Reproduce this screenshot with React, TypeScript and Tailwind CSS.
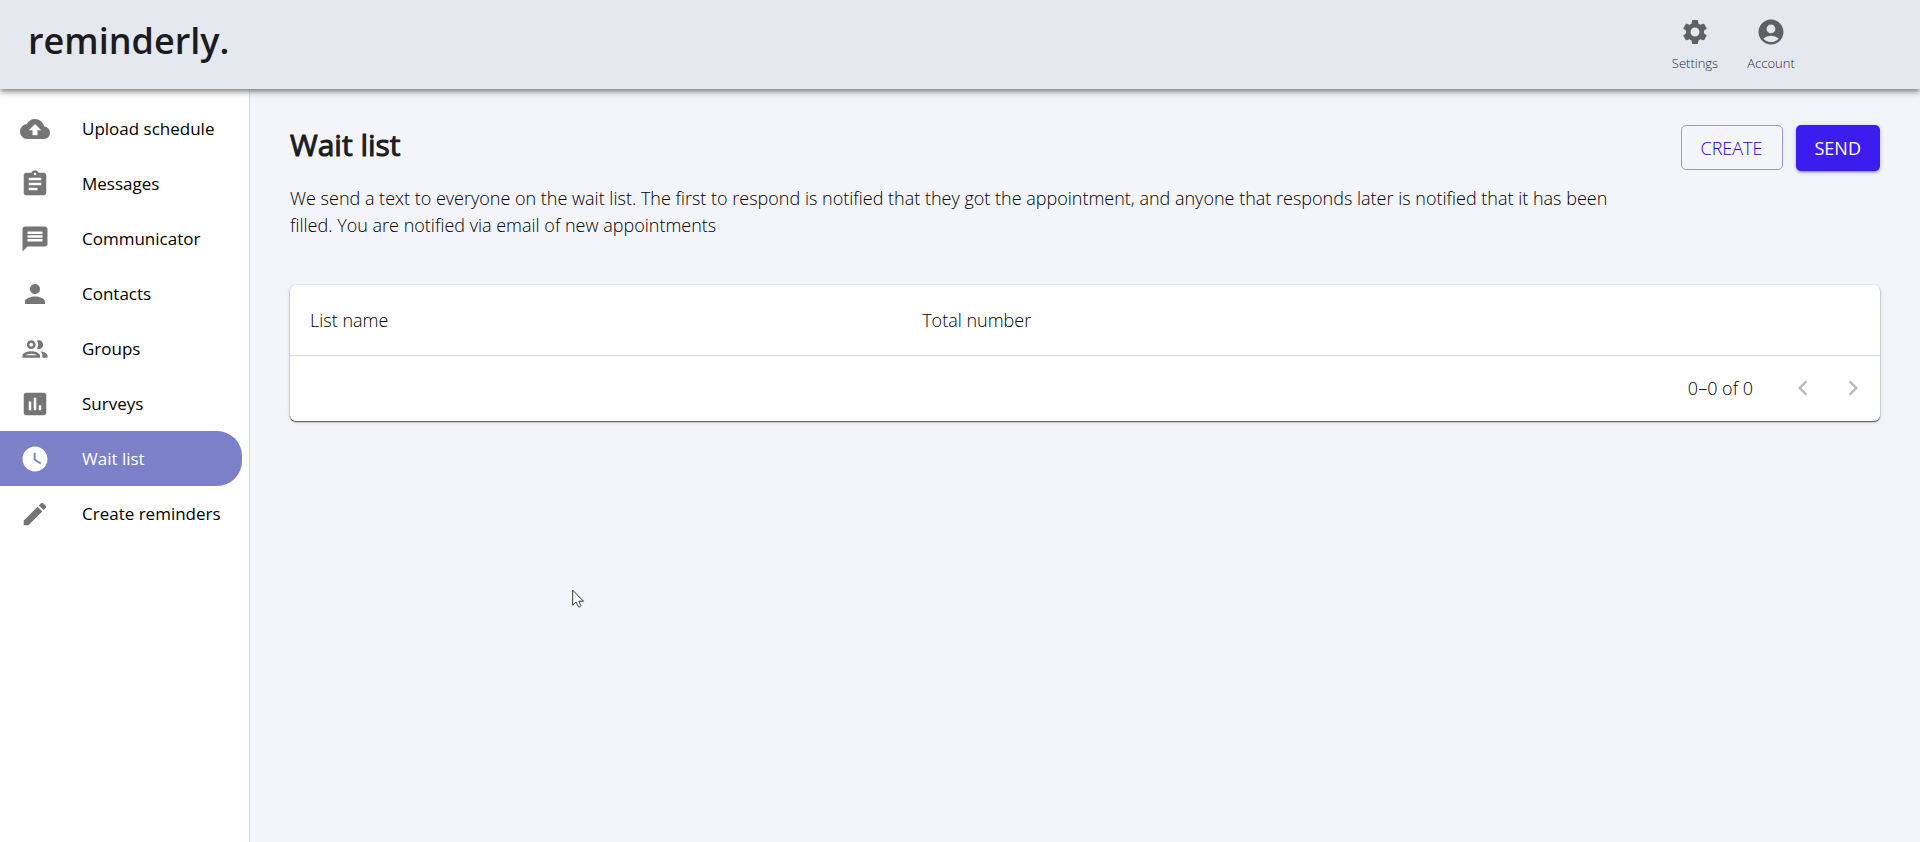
import type { IconType } from "react-icons";
import {
  MdAccountCircle,
  MdAssessment,
  MdAssignment,
  MdChevronLeft,
  MdChevronRight,
  MdCloudUpload,
  MdEdit,
  MdMessage,
  MdOutlinePeople,
  MdPerson,
  MdSettings,
  MdWatchLater,
} from "react-icons/md";

const navItems: { label: string; Icon: IconType; active?: boolean }[] = [
  { label: "Upload schedule", Icon: MdCloudUpload },
  { label: "Messages", Icon: MdAssignment },
  { label: "Communicator", Icon: MdMessage },
  { label: "Contacts", Icon: MdPerson },
  { label: "Groups", Icon: MdOutlinePeople },
  { label: "Surveys", Icon: MdAssessment },
  { label: "Wait list", Icon: MdWatchLater, active: true },
  { label: "Create reminders", Icon: MdEdit },
];

const headerLinks: { label: string; Icon: IconType }[] = [
  { label: "Settings", Icon: MdSettings },
  { label: "Account", Icon: MdAccountCircle },
];

function Header() {
  return (
    <header className="relative z-10 flex h-[89px] items-start justify-between bg-[#e6e8f0] pr-[111px] pl-7 shadow-[0px_2px_4px_-1px_rgba(0,0,0,0.3),0px_4px_5px_0px_rgba(0,0,0,0.2),0px_1px_10px_0px_rgba(0,0,0,0.16)]">
      <a href="#" className="pt-4 text-4xl leading-[50px] font-semibold text-[#1c1c1e]">
        reminderly.
      </a>
      <nav aria-label="User" className="flex pt-[17px]">
        {headerLinks.map(({ label, Icon }) => (
          <a
            key={label}
            href="#"
            className="flex w-19 flex-col items-center gap-[7px] text-[#5f6062]"
          >
            <Icon size={30} aria-hidden="true" />
            <span className="text-[13px] leading-[18px] font-light text-[#2c2d2f]">{label}</span>
          </a>
        ))}
      </nav>
    </header>
  );
}

function Sidebar() {
  return (
    <nav aria-label="Main" className="w-[250px] shrink-0 border-r border-[#dcdce0] bg-white pt-3">
      <ul>
        {navItems.map(({ label, Icon, active }) => (
          <li key={label}>
            <a
              href="#"
              aria-current={active ? "page" : undefined}
              className={
                active
                  ? "mr-[7px] flex h-[55px] items-center rounded-r-[25px] bg-[#7b80c9] pl-5 text-white"
                  : "mr-[7px] flex h-[55px] items-center pl-5 text-black"
              }
            >
              <Icon
                size={30}
                aria-hidden="true"
                className={active ? "shrink-0 text-white" : "shrink-0 text-[#757575]"}
              />
              <span className="ml-8 text-[17px] leading-6 whitespace-nowrap">{label}</span>
            </a>
          </li>
        ))}
      </ul>
    </nav>
  );
}

function WaitListTable() {
  return (
    <div className="mt-[46px] overflow-hidden rounded-md bg-white shadow-[0px_1px_1px_0px_rgba(0,0,0,0.55),0px_1px_3px_0px_rgba(0,0,0,0.3)]">
      <table className="w-full table-fixed border-collapse text-left text-lg font-light text-black">
        <thead>
          <tr className="h-[70px] border-b border-[#dcdcdc]">
            <th scope="col" className="w-[38.5%] pl-5 font-light">
              List name
            </th>
            <th scope="col" className="pl-5 font-light">
              Total number
            </th>
          </tr>
        </thead>
        <tfoot>
          <tr className="h-[66px]">
            <td colSpan={2}>
              <div className="flex items-center justify-end pr-0.5">
                <span className="mr-[25px]">0–0 of 0</span>
                <button
                  type="button"
                  disabled
                  aria-label="Previous page"
                  className="flex size-[50px] items-center justify-center text-[#bcbcbc]"
                >
                  <MdChevronLeft size={30} aria-hidden="true" />
                </button>
                <button
                  type="button"
                  disabled
                  aria-label="Next page"
                  className="flex size-[50px] items-center justify-center text-[#bcbcbc]"
                >
                  <MdChevronRight size={30} aria-hidden="true" />
                </button>
              </div>
            </td>
          </tr>
        </tfoot>
      </table>
    </div>
  );
}

function Pointer() {
  return (
    <svg
      aria-hidden="true"
      className="pointer-events-none absolute top-[589px] left-[572px] z-20"
      width="13"
      height="20"
      viewBox="0 0 13 20"
    >
      <path
        d="M.7 1.2v15l3.4-3.2 2.2 4.7c.4.8 2.9-.2 2.5-1.1l-2-4.4h4.7z"
        fill="#fff"
        stroke="#333"
        strokeWidth="1"
        strokeLinejoin="round"
      />
    </svg>
  );
}

export default function App() {
  return (
    <div className="relative flex min-h-screen flex-col bg-[#f4f5fb] font-['Open_Sans',sans-serif]">
      <Header />
      <div className="flex grow">
        <Sidebar />
        <main className="min-w-0 grow px-10 pt-9">
          <div className="flex items-start justify-between">
            <div className="max-w-[1350px]">
              <h1 className="text-[30px] leading-10 text-[#1c1c1e] [-webkit-text-stroke:1px_#1c1c1e]">
                Wait list
              </h1>
              <p className="mt-5 text-lg leading-[27px] font-light text-black">
                We send a text to everyone on the wait list. The first to respond is notified that
                they got the appointment, and anyone that responds later is notified that it has
                been filled. You are notified via email of new appointments
              </p>
            </div>
            <div className="flex shrink-0 gap-[13px]">
              <button
                type="button"
                className="h-[45px] rounded-[5px] border border-[#a094e0] px-[19px] text-lg font-light text-[#2a00c8]"
              >
                CREATE
              </button>
              <button
                type="button"
                className="h-[46px] rounded-[5px] bg-[#3d1cf0] px-[19px] text-lg text-white shadow-[0px_3px_1px_-2px_rgba(0,0,0,0.2),0px_2px_2px_0px_rgba(0,0,0,0.14),0px_1px_5px_0px_rgba(0,0,0,0.2)]"
              >
                SEND
              </button>
            </div>
          </div>
          <WaitListTable />
        </main>
      </div>
      <Pointer />
    </div>
  );
}
